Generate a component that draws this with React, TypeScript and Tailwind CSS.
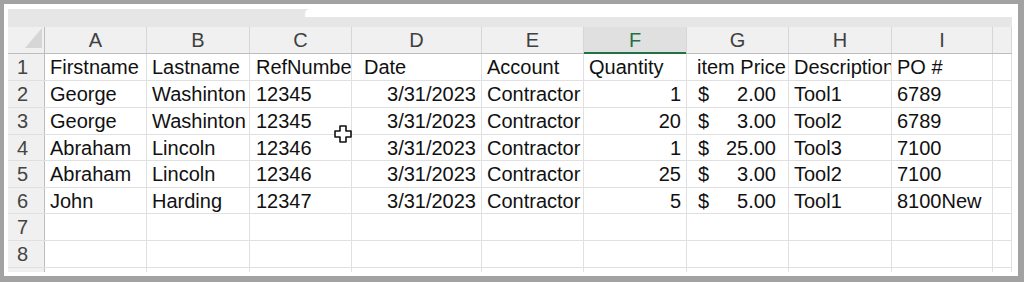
import React from "react";

// Column widths (A..I plus the partial J column at the right edge)
const COL_W = [
  "w-[102px]",
  "w-[103px]",
  "w-[102px]",
  "w-[130px]",
  "w-[102px]",
  "w-[103px]",
  "w-[102px]",
  "w-[103px]",
  "w-[101px]",
  "w-[19px]",
];
const LETTERS = ["A", "B", "C", "D", "E", "F", "G", "H", "I", ""];

type Row = { n: string; h: string; cells: string[] };

const ROWS: Row[] = [
  {
    n: "1",
    h: "h-[27px]",
    cells: ["Firstname", "Lastname", "RefNumber", "Date", "Account", "Quantity", "item Price", "Description", "PO #"],
  },
  {
    n: "2",
    h: "h-[27px]",
    cells: ["George", "Washinton", "12345", "3/31/2023", "Contractor", "1", "2.00", "Tool1", "6789"],
  },
  {
    n: "3",
    h: "h-[27px]",
    cells: ["George", "Washinton", "12345", "3/31/2023", "Contractor", "20", "3.00", "Tool2", "6789"],
  },
  {
    n: "4",
    h: "h-[26px]",
    cells: ["Abraham", "Lincoln", "12346", "3/31/2023", "Contractor", "1", "25.00", "Tool3", "7100"],
  },
  {
    n: "5",
    h: "h-[27px]",
    cells: ["Abraham", "Lincoln", "12346", "3/31/2023", "Contractor", "25", "3.00", "Tool2", "7100"],
  },
  {
    n: "6",
    h: "h-[26px]",
    cells: ["John", "Harding", "12347", "3/31/2023", "Contractor", "5", "5.00", "Tool1", "8100New"],
  },
  { n: "7", h: "h-[27px]", cells: [] },
  { n: "8", h: "h-[27px]", cells: [] },
];

function DataCell({ col, value, header }: { col: number; value?: string; header: boolean }) {
  const base = `${COL_W[col]} shrink-0 h-full border-r border-[#e0e0e0] overflow-hidden whitespace-nowrap flex items-center`;
  if (!value) return <div className={base} />;

  if (header) {
    const pad = col === 3 ? "pl-[12px]" : col === 6 ? "pl-[10px]" : col === 2 ? "pl-[6px]" : "pl-[5px]";
    return (
      <div className={`${base} ${pad}`}>
        <span>{value}</span>
      </div>
    );
  }

  if (col === 6) {
    // accounting format: currency sign on the left, amount on the right
    return (
      <div className={`${base} justify-between pl-[11px] pr-[12px]`}>
        <span>$</span>
        <span>{value}</span>
      </div>
    );
  }
  if (col === 3 || col === 5) {
    return (
      <div className={`${base} justify-end pr-[5px]`}>
        <span>{value}</span>
      </div>
    );
  }
  return (
    <div className={`${base} ${col === 2 ? "pl-[6px]" : "pl-[5px]"}`}>
      <span>{value}</span>
    </div>
  );
}

function CellCursor() {
  return (
    <svg
      className="absolute left-[334px] top-[125px]"
      width="18"
      height="18"
      viewBox="0 0 18 18"
    >
      <polygon
        points="6,1 12,1 12,6 17,6 17,12 12,12 12,17 6,17 6,12 1,12 1,6 6,6"
        fill="#ffffff"
        stroke="#111111"
        strokeWidth="1.6"
        strokeLinejoin="round"
      />
    </svg>
  );
}

export default function App() {
  return (
    <div
      className="relative w-[1024px] h-[282px] bg-[#a2a2a2] pt-[4px] pl-[4px] pr-[6px] pb-[6px]"
      style={{ fontFamily: '"Liberation Sans", Arial, sans-serif' }}
    >
      <div className="w-full h-full bg-white pt-[5px] pl-[4px] pr-[6px] pb-[4px] overflow-hidden">
        <div className="w-[1004px] flex flex-col">
          {/* ribbon strip above the column headers */}
          <div className="h-[18px] bg-[#e6e6e6] flex">
            <div className="w-[297px] shrink-0" />
            <div className="flex-1 h-[8px] bg-white rounded-tl-[5px]" />
          </div>

          {/* column header row */}
          <div className="h-[27px] flex bg-[#f0f0f0] border-b border-[#bdbdbd] text-[20px] text-[#404040]">
            <div className="w-[37px] shrink-0 h-full border-r border-[#bdbdbd] relative">
              <svg className="absolute left-[17px] top-[1px]" width="18" height="21" viewBox="0 0 18 21">
                <polygon points="17,0 17,20 0,20" fill="#d6d6d6" />
              </svg>
            </div>
            {LETTERS.map((l, i) => (
              <div
                key={i}
                className={`${COL_W[i]} shrink-0 h-full border-r border-[#d6d6d6] flex items-center justify-center relative ${
                  i === 5 ? "bg-[#e0e0e0] text-[#217346]" : ""
                }`}
              >
                <span>{l}</span>
                {i === 5 && <div className="absolute left-0 right-0 bottom-[-1px] h-[2px] bg-[#217346]" />}
              </div>
            ))}
          </div>

          {/* data rows */}
          {ROWS.map((r, ri) => (
            <div key={r.n} className={`${r.h} flex border-b border-[#e0e0e0] text-[20px] text-[#111111]`}>
              <div className="w-[37px] shrink-0 h-full bg-[#f0f0f0] border-r border-[#bdbdbd] flex items-center justify-center pr-[7px] text-[#444444]">
                {r.n}
              </div>
              {COL_W.map((_, ci) => (
                <DataCell key={ci} col={ci} value={r.cells[ci]} header={ri === 0} />
              ))}
            </div>
          ))}

          {/* top sliver of row 9 */}
          <div className="h-[4px] flex">
            <div className="w-[37px] shrink-0 h-full bg-[#f0f0f0] border-r border-[#bdbdbd]" />
            {COL_W.map((w, ci) => (
              <div key={ci} className={`${w} shrink-0 h-full border-r border-[#e0e0e0]`} />
            ))}
          </div>
        </div>
      </div>
      <CellCursor />
    </div>
  );
}
